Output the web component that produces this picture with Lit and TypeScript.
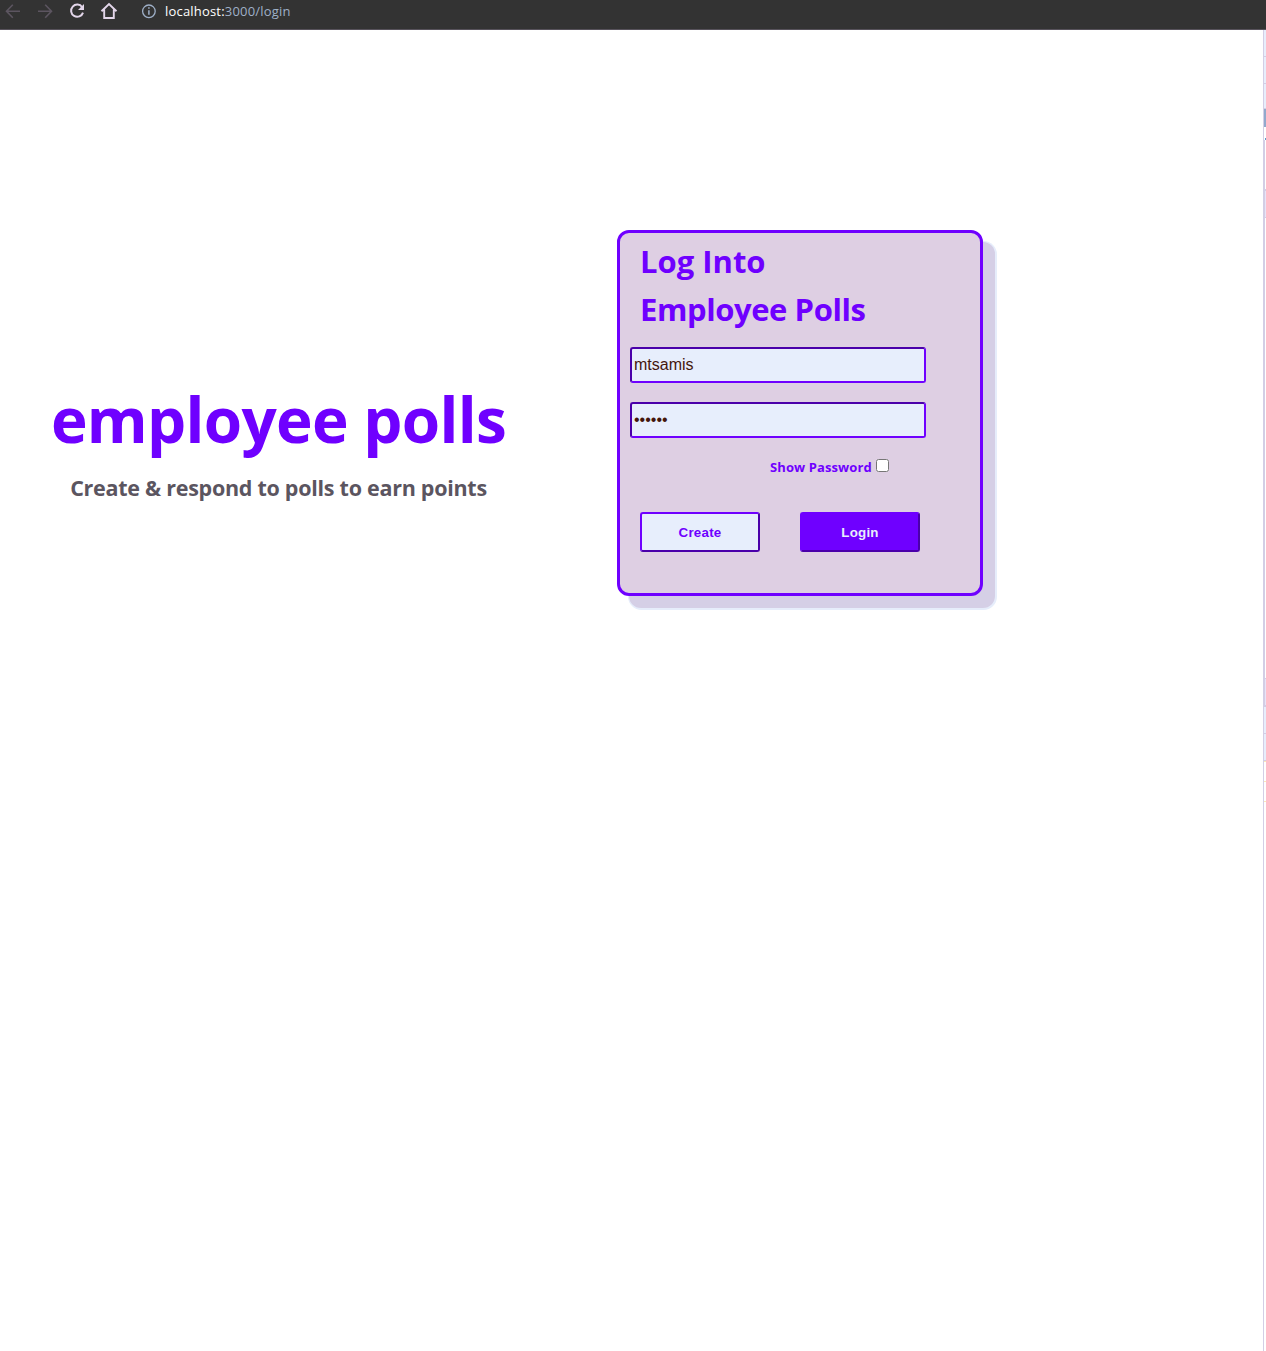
import { LitElement, html, css } from "lit";
import { customElement, state } from "lit/decorators.js";

@customElement("browser-bar")
class BrowserBar extends LitElement {
  static styles = css`
    :host {
      display: flex;
      align-items: flex-start;
      box-sizing: border-box;
      height: 30px;
      background: #333333;
      border-bottom: 1px solid #57525b;
      font-family: "Open Sans", "Noto Sans", sans-serif;
    }
    .icons { display: block; width: 165px; height: 24px; flex: none; }
    .url {
      font-size: 13px;
      line-height: 22px;
      letter-spacing: 0.19px;
      color: #9fb0c8;
      white-space: nowrap;
    }
    .host { color: #ffffff; }
  `;
  render() {
    return html`
      <svg class="icons" viewBox="0 0 165 24" fill="none">
        <g stroke="#5c5560" stroke-width="1.6">
          <path d="M20 11.3H7M12.8 4.8L6.5 11.3L12.8 17.8" />
          <path d="M38 11.3H51M45.2 4.8L51.5 11.3L45.2 17.8" />
        </g>
        <path d="M82.2 7.2A6.1 6.1 0 1 0 83 12.6" stroke="#e3d6ea" stroke-width="2" />
        <path d="M84 4V10H78Z" fill="#e3d6ea" />
        <path d="M101.5 11.3L109 4L116.5 11.3M104.2 9.5V18H113.8V9.5" stroke="#e3d6ea" stroke-width="1.9" />
        <circle cx="148.9" cy="11.3" r="6.3" stroke="#9fb0c8" stroke-width="1.3" />
        <path d="M148.9 10.2V14.8M148.9 7.2V8.8" stroke="#9fb0c8" stroke-width="1.5" />
      </svg>
      <div class="url"><span class="host">localhost:</span>3000/login</div>
    `;
  }
}

@customElement("login-card")
class LoginCard extends LitElement {
  @state() private shown = false;

  static styles = css`
    :host {
      display: block;
      box-sizing: border-box;
      width: 366px;
      height: 366px;
      padding: 4px 10px;
      background: #decfe3;
      border: 3px solid #6f00ff;
      border-radius: 12px;
      box-shadow: 12px 12px 0 0 #d5cfe6, 12.5px 12.5px 0 1.5px #e6edfb;
      color: #6f00ff;
      font-family: "Open Sans", "Noto Sans", sans-serif;
    }
    .title {
      margin: 0 0 14px 10px;
      font-size: 31px;
      line-height: 48px;
      font-weight: 700;
      white-space: nowrap;
    }
    .name { letter-spacing: -0.42px; }
    .field {
      display: block;
      box-sizing: border-box;
      width: 296px;
      height: 36px;
      margin: 0 0 19px;
      padding: 1px 2px;
      border: 2px solid;
      border-color: #4a00aa #6f00ff #6f00ff #4a00aa;
      border-radius: 3px;
      background: #e7eefc;
      color: #45160c;
      font: 16px "Liberation Sans", Arial, sans-serif;
      outline: none;
    }
    .show {
      display: flex;
      align-items: center;
      gap: 4px;
      height: 20px;
      padding-left: 140px;
      font-size: 13px;
      letter-spacing: 0.1px;
      font-weight: 700;
      white-space: nowrap;
    }
    .show input { width: 13px; height: 13px; margin: 0 0 3px; }
    .actions { display: flex; gap: 40px; padding: 35px 0 0 10px; }
    .btn {
      box-sizing: border-box;
      width: 120px;
      height: 40px;
      padding: 0;
      border: 2px solid;
      border-color: #6f00ff #4a00aa #4a00aa #6f00ff;
      border-radius: 3px;
      background: #e7eefc;
      color: #6f00ff;
      font: 700 13.333px "Liberation Sans", Arial, sans-serif;
      letter-spacing: 0.25px;
    }
    .primary { background: #6f00ff; color: #e7eefc; }
  `;
  render() {
    return html`
      <h1 class="title">Log Into<br /><span class="name">Employee Polls</span></h1>
      <input class="field" type="text" .value=${"mtsamis"} />
      <input class="field" type=${this.shown ? "text" : "password"} .value=${"secret"} />
      <label class="show"
        ><span>Show Password</span
        ><input type="checkbox" .checked=${this.shown} @change=${() => (this.shown = !this.shown)}
      /></label>
      <div class="actions">
        <button class="btn">Create</button>
        <button class="btn primary">Login</button>
      </div>
    `;
  }
}

@customElement("app-root")
class AppRoot extends LitElement {
  static styles = css`
    :host { display: block; height: 1351px; background: #ffffff; overflow: hidden; }
    .body { display: grid; grid-template-columns: 1263px 3px; height: 1321px; }
    .page { display: flex; align-items: flex-start; padding-top: 200px; }
    .intro {
      display: flex;
      flex-direction: column;
      align-items: center;
      box-sizing: border-box;
      width: 557px;
      padding-top: 149px;
      margin-right: 60px;
      font-family: "Open Sans", "Noto Sans", sans-serif;
      font-weight: 700;
      white-space: nowrap;
    }
    .brand { margin: 0; font-size: 62px; line-height: 80px; letter-spacing: -0.7px; color: #6f00ff; }
    .tagline { margin: 14px 0 0; font-size: 21.5px; line-height: 30px; letter-spacing: -0.27px; color: #5b5560; }
    .edge {
      display: flex;
      flex-direction: column;
      border-left: 1px solid #d3cee5;
    }
    .row { flex: none; box-sizing: border-box; border-bottom: 1px solid #d3cee5; background: #e7eefc; }
    .r26 { height: 27px; }
    .r25 { height: 25px; }
    .mark { flex: none; height: 18px; background: #92a9cc; }
    .gap { flex: none; box-sizing: border-box; width: 1px; height: 13px; margin-left: 1px; border-bottom: 2px solid #5b9bc9; }
    .tall { height: 51px; background: #ffffff; border-left: 1px solid #d3cee5; border-bottom-width: 2px; }
    .lilac { background: #e8e4f8; border-left: 1px solid #d3cee5; }
    .long { height: 461px; background: #ffffff; border-left: 1px solid #d3cee5; }
    .foot { height: 28px; border-bottom-width: 2px; }
    .line { flex: none; box-sizing: border-box; height: 20px; border-bottom: 1px solid #fbe9b8; }
    .first { height: 1px; }
  `;
  render() {
    return html`
      <browser-bar></browser-bar>
      <div class="body">
        <main class="page">
          <section class="intro">
            <h1 class="brand">employee polls</h1>
            <p class="tagline">Create &amp; respond to polls to earn points</p>
          </section>
          <login-card></login-card>
        </main>
        <aside class="edge">
          <div class="row r26"></div>
          <div class="row r26"></div>
          <div class="row r25"></div>
          <div class="mark"></div>
          <div class="gap"></div>
          <div class="row tall"></div>
          <div class="row r26 lilac"></div>
          <div class="row long"></div>
          <div class="row foot lilac"></div>
          <div class="row r26"></div>
          <div class="row r26"></div>
          <div class="line first"></div>
          <div class="line"></div>
          <div class="line"></div>
        </aside>
      </div>
    `;
  }
}
